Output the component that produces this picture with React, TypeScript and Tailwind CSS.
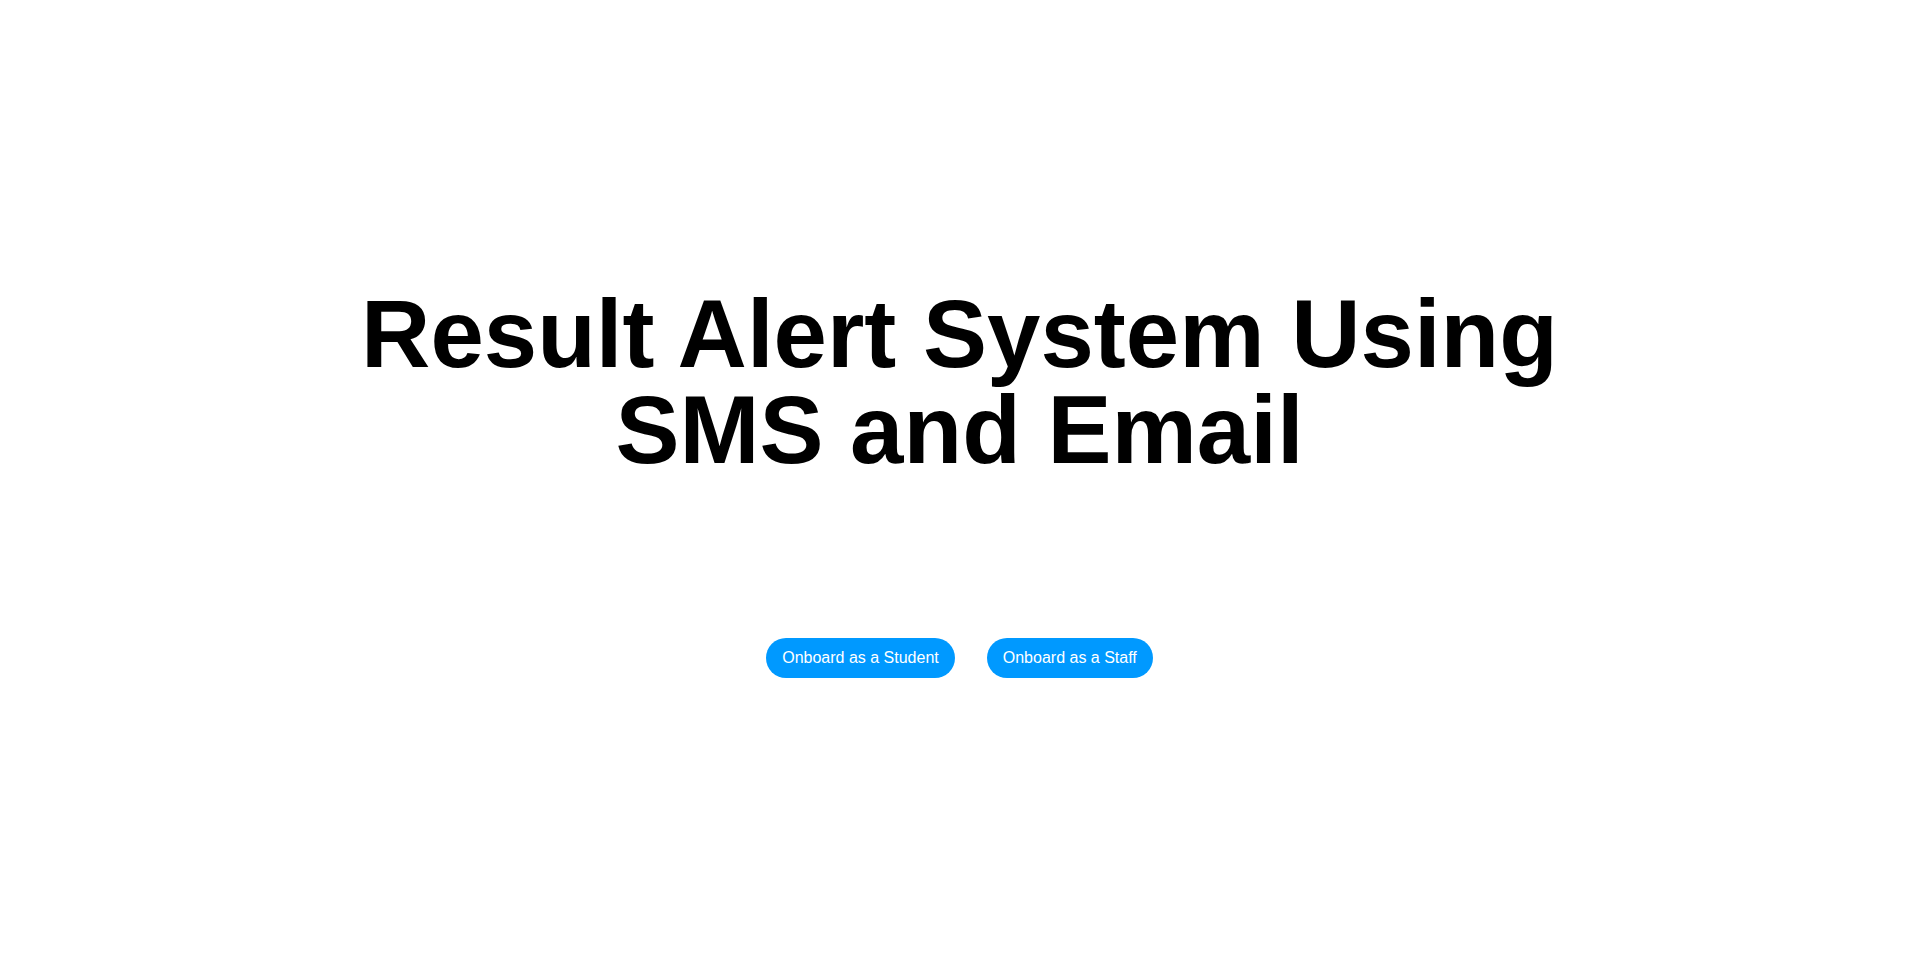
export default function App() {
  return (
    <div
      className="flex h-screen w-full flex-col items-center justify-center bg-white pt-[4px]"
      style={{ fontFamily: '"Liberation Sans", Arial, sans-serif' }}
    >
      <h1 className="text-center text-8xl leading-none font-bold text-black">
        Result Alert System Using
        <br />
        SMS and Email
      </h1>
      <div className="mt-40 flex items-center gap-8">
        <button className="rounded-full bg-[#0099ff] px-4 py-2 text-base leading-6 text-white">
          Onboard as a Student
        </button>
        <button className="rounded-full bg-[#0099ff] px-4 py-2 text-base leading-6 text-white">
          Onboard as a Staff
        </button>
      </div>
    </div>
  );
}
